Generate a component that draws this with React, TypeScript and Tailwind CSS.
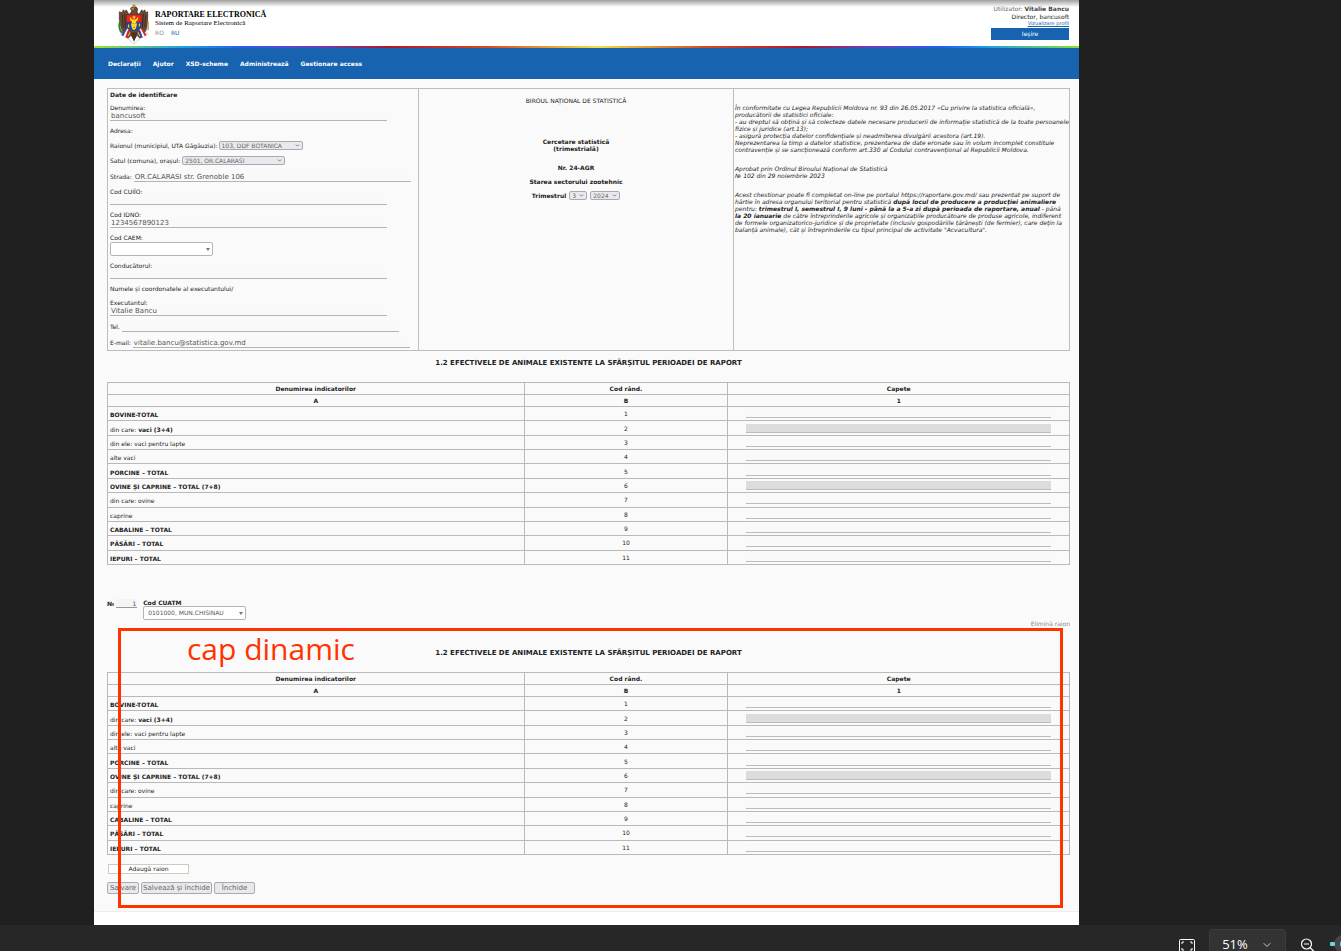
import React from "react";
import { ChevronDown } from "lucide-react";

const fieldBase = "border-b border-[#b4b4b4] bg-[#f9f9f9] px-px text-[7px] leading-[8px] text-[#555] outline-none";

function Line({ id, value = "", tall = false }: { id: string; value?: string; tall?: boolean }) {
  return <input id={id} defaultValue={value} className={`${fieldBase} block w-[277px] ${tall ? "h-[10px]" : "h-[9px]"}`} />;
}

function Stacked({ id, label, value }: { id: string; label: string; value?: string }) {
  return (
    <div className="mt-[6px]">
      <label htmlFor={id} className="block">{label}</label>
      <Line id={id} value={value} />
    </div>
  );
}

function Inline({ id, label, value }: { id: string; label: string; value?: string }) {
  return (
    <div className="mt-[6px] flex items-center gap-[2px]">
      <label htmlFor={id}>{label}</label>
      <Line id={id} value={value} tall />
    </div>
  );
}

function Pick({ id, value, size }: { id: string; value: string; size: string }) {
  return (
    <span className={`relative inline-block h-[9px] font-normal ${size}`}>
      <select id={id} aria-label={id} className="block h-[9px] w-full appearance-none rounded-[2px] border border-[#a9a9b4] bg-[#e9e9ed] pl-[2px] text-[6px] leading-[7px] text-[#666] outline-none">
        <option>{value}</option>
      </select>
      <ChevronDown className="pointer-events-none absolute right-[3px] top-[2px] size-[5px] text-[#444]" strokeWidth={3} />
    </span>
  );
}

function Combo({ id, value }: { id: string; value: string }) {
  return (
    <span className="relative block h-[14px] w-[103px]">
      <select id={id} className="block h-[14px] w-full appearance-none rounded-[2px] border border-[#b5b5b5] bg-white pl-[4px] text-[6px] leading-[12px] text-[#555] outline-none">
        <option>{value}</option>
      </select>
      <svg viewBox="0 0 4 3" className="pointer-events-none absolute right-[3px] top-[6px] h-[3px] w-[4px]">
        <path d="M0 0h4L2 3z" fill="#777" />
      </svg>
    </span>
  );
}

type Row = { plain?: string; bold?: string; total?: boolean };
const rows: Row[] = [
  { bold: "BOVINE-TOTAL" },
  { plain: "din care: ", bold: "vaci (3+4)", total: true },
  { plain: "din ele: vaci pentru lapte" },
  { plain: "alte vaci" },
  { bold: "PORCINE – TOTAL" },
  { bold: "OVINE ȘI CAPRINE – TOTAL (7+8)", total: true },
  { plain: "din care: ovine" },
  { plain: "caprine" },
  { bold: "CABALINE – TOTAL" },
  { bold: "PĂSĂRI – TOTAL" },
  { bold: "IEPURI – TOTAL" },
];

function Animals({ name }: { name: string }) {
  const cell = "border border-[#b9b9b9]";
  return (
    <>
      <h2 className="text-center text-[7px] leading-[8px] font-bold">
        1.2 EFECTIVELE DE ANIMALE EXISTENTE LA SFÂRȘITUL PERIOADEI DE RAPORT
      </h2>
      <table className="mt-[15px] h-[183px] w-full table-fixed border-collapse">
        <colgroup>
          <col className="w-[43.3%]" />
          <col className="w-[21.2%]" />
          <col />
        </colgroup>
        <thead>
          <tr className="h-[12px]">
            <th className={cell}>Denumirea indicatorilor</th>
            <th className={cell}>Cod rând.</th>
            <th className={cell}>Capete</th>
          </tr>
          <tr className="h-[12px]">
            <th className={cell}>A</th>
            <th className={cell}>B</th>
            <th className={cell}>1</th>
          </tr>
        </thead>
        <tbody>
          {rows.map((r, i) => (
            <tr key={i}>
              <td className={`${cell} px-[2px] pt-[3px]`}>
                {r.plain}
                <b>{r.bold}</b>
              </td>
              <td className={`${cell} pt-px text-center`}>{i + 1}</td>
              <td className={`${cell} px-[18px] py-[2px]`}>
                <input
                  aria-label={`${name} ${i + 1}`}
                  readOnly={r.total}
                  className={`block h-[9px] w-full border-b border-[#bbb] text-[6px] outline-none ${r.total ? "bg-[#dcdcdc]" : "bg-[#f9f9f9]"}`}
                />
              </td>
            </tr>
          ))}
        </tbody>
      </table>
    </>
  );
}

function Emblem() {
  return (
    <svg viewBox="0 0 32 42" className="h-[41px] w-[32px]" aria-label="Stema">
      <path d="M2 31l7 4 7 6 7-6 7-4-2-4H4z" fill="#fff" stroke="#cfcfcf" strokeWidth="1" />
      <path d="M14 7C12 6 12 3 15 3h3c2 1 2 3 1 5l2 3 3-5 1 2 2-2 1 3 2-1v8l-1 9-2 4-2-2-3 8-3-3-3 5-3-5-3 3-3-8-2 2-2-4-2-9V8l3 1 1-3 2 2 1-2 3 5z" fill="#6b4a35" stroke="#3a2418" strokeWidth=".7" />
      <path d="M4 11l1 13M6.500 10l1 17M25.500 10l-1 17M28 11l-1 13" stroke="#33221a" strokeWidth=".8" />
      <path d="M16 0v4M14.300 1.500h3.400" stroke="#b8952a" strokeWidth="1" />
      <path d="M12.500 5l3-1v2z" fill="#e9c22c" />
      <path d="M8 11h16v8H8z" fill="#e8261c" stroke="#33221a" strokeWidth=".4" />
      <path d="M8 19h16c0 5-3 8-8 9-5-1-8-4-8-9z" fill="#2142a8" />
      <path d="M12 13c-1 3 1 4 2 5l-1 3 1 4 2 2 2-2 1-4-1-3c1-1 3-2 2-5-1 2-2 3-4 3s-3-1-4-3z" fill="#f4dc22" />
      <path d="M16 11.500l.7 1.300 1.300.2-1 1 .3 1.300-1.300-.6-1.300.6.3-1.300-1-1 1.300-.2z" fill="#f4cf22" />
      <path d="M14.500 20h1M16.800 20h1M15 24h2" stroke="#8a6a10" strokeWidth=".7" />
      <path d="M10.500 21v3M21.500 20v3" stroke="#f4cf22" strokeWidth="1.300" />
      <path d="M1.500 18c-1 5 0 10 3 12" fill="none" stroke="#2f7d36" strokeWidth="2" />
      <path d="M30.500 18v9" stroke="#b99b35" strokeWidth="1.300" />
      <path d="M3 32l5-8 2 2-4 7z" fill="#2849ad" />
      <path d="M5 33l4-8 1.500 1.500L8 34z" fill="#fff" />
      <path d="M7 34l3-8 1.500 2L10 35z" fill="#d82525" />
      <path d="M29 32l-5-8-2 2 4 7z" fill="#d82525" />
      <path d="M27 33l-4-8-1.500 1.500L24 34z" fill="#fff" />
      <path d="M25 34l-3-8-1.500 2 1.500 7z" fill="#2849ad" />
      <path d="M12.500 29h7L16 39z" fill="#50301f" />
      <path d="M12 29l-2 4M20 29l2 4" stroke="#dfb62c" strokeWidth="1.100" />
    </svg>
  );
}

export default function App() {
  return (
    <div className="flex min-h-screen flex-col bg-[#202020] font-['DejaVu_Sans',sans-serif] text-[6px] leading-[8px] text-[#222]">
      <div className="relative mr-[262px] ml-[94px] flex-1 bg-white">
        <header className="flex h-[46px] justify-between bg-linear-to-b from-[#a0a0a0] to-white to-[7px] pr-[10px] pl-[24px]">
          <div className="flex gap-[5px] pt-[4px]">
            <Emblem />
            <div className="pt-[6px] font-['Liberation_Serif',serif]">
              <h1 className="text-[8px] leading-[9px] font-bold text-black">RAPORTARE ELECTRONICĂ</h1>
              <p className="text-[7px] leading-[9px] text-black">Sistem de Raportare Electronică</p>
              <p className="flex gap-[7px] font-['DejaVu_Sans',sans-serif] text-[6px] leading-[9px] text-[#888]">
                <span>RO</span>
                <a href="#ru" className="text-[#1763af]">RU</a>
              </p>
            </div>
          </div>
          <div className="flex w-[78px] flex-col pt-[4px] text-right whitespace-nowrap">
            <p className="self-end leading-[9px] text-[#666]">Utilizator: <b className="text-[#444]">Vitalie Bancu</b></p>
            <p className="leading-[7px]">Director, bancusoft</p>
            <p className="text-[5px] leading-[7px]"><a href="#profil" className="text-[#1763af] underline">Vizualizare profil</a></p>
            <button className="mt-px h-[12px] bg-[#1763af] text-center text-white">Ieșire</button>
          </div>
        </header>
        <div className="h-[2px] bg-[linear-gradient(to_right,#9be82a_0%,#22a0e0_9%,#2560e8_15%,#6a3fc0_22%,#b01828_30%,#d84a20_40%,#f2e040_51%,#d84a20_62%,#b01828_72%,#6a3fc0_79%,#2060f0_86%,#22a0e0_91%,#8be02a_100%)]" />
        <nav className="flex h-[31px] items-center gap-[12px] bg-[#1763af] pl-[14px] font-bold text-white">
          <a href="#declaratii">Declarații</a>
          <a href="#ajutor">Ajutor</a>
          <a href="#xsd">XSD-scheme</a>
          <a href="#admin">Administrează</a>
          <a href="#access">Gestionare access</a>
        </nav>

        <main className="min-h-[833px] border-b border-[#eee] bg-[#fafafa] pt-[9px] pr-[9px] pl-[13px]">
          <section className="grid grid-cols-[minmax(0,311fr)_minmax(0,315fr)_minmax(0,335fr)] divide-x divide-[#bdbdbd] border border-[#bdbdbd]">
            <div className="px-[2px] pt-[2px] pb-[2px]">
              <h2 className="font-bold">Date de identificare</h2>
              <div className="mt-[5px]">
                <label htmlFor="denumirea" className="block">Denumirea:</label>
                <Line id="denumirea" value="bancusoft" />
              </div>
              <p className="mt-[6px]">Adresa:</p>
              <div className="mt-[6px] flex items-center gap-px">
                <label htmlFor="raion">Raionul (municipiul, UTA Găgăuzia):</label>
                <Pick id="raion" value="103, DDF BOTANICA" size="w-[84px]" />
              </div>
              <div className="mt-[6px] flex items-center gap-[2px]">
                <label htmlFor="satul">Satul (comuna), orașul:</label>
                <Pick id="satul" value="2501, OR.CALARASI" size="w-[103px]" />
              </div>
              <div className="mt-[7px]">
                <Inline id="strada" label="Strada:" value="OR.CALARASI str. Grenoble 106" />
              </div>
              <Stacked id="cuiio" label="Cod CUIÎO:" />
              <Stacked id="idno" label="Cod IDNO:" value="1234567890123" />
              <div className="mt-[6px]">
                <label htmlFor="caem" className="block">Cod CAEM:</label>
                <Combo id="caem" value="" />
              </div>
              <Stacked id="conducator" label="Conducătorul:" />
              <p className="mt-[6px]">Numele și coordonatele al executantului/</p>
              <Stacked id="executant" label="Executantul:" value="Vitalie Bancu" />
              <Inline id="tel" label="Tel." />
              <Inline id="email" label="E-mail:" value="vitalie.bancu@statistica.gov.md" />
            </div>
            <div className="pt-[8px] text-center font-bold">
              <p className="font-normal">BIROUL NAȚIONAL DE STATISTICĂ</p>
              <p className="mt-[33px] leading-[7px]">Cercetare statistică<br />(trimestrială)</p>
              <p className="mt-[12px]">Nr. 24-AGR</p>
              <p className="mt-[6px]">Starea sectorului zootehnic</p>
              <p className="mt-[5px] flex items-center justify-center gap-[3px]">
                Trimestrul
                <Pick id="trimestru" value="3" size="w-[18px]" />
                <Pick id="an" value="2024" size="w-[30px]" />
              </p>
            </div>
            <div className="pt-[15px] pl-px leading-[7px] whitespace-nowrap italic">
              <p>
                În conformitate cu Legea Republicii Moldova nr. 93 din 26.05.2017 «Cu privire la statistica oficială»,<br />
                producătorii de statistici oficiale:<br />
                - au dreptul să obțină și să colecteze datele necesare producerii de informație statistică de la toate persoanele<br />
                fizice și juridice (art.13);<br />
                - asigură protecția datelor confidențiale și neadmiterea divulgării acestora (art.19).<br />
                Neprezentarea la timp a datelor statistice, prezentarea de date eronate sau în volum incomplet constituie<br />
                contravenție și se sancționează conform art.330 al Codului contravențional al Republicii Moldova.
              </p>
              <p className="mt-[12px]">Aprobat prin Ordinul Biroului Național de Statistică<br />№ 102 din 29 noiembrie 2023</p>
              <p className="mt-[12px]">
                Acest chestionar poate fi completat on-line pe portalul https://raportare.gov.md/ sau prezentat pe suport de<br />
                hârtie în adresa organului teritorial pentru statistică <b>după locul de producere a producției animaliere</b><br />
                pentru: <b>trimestrul I, semestrul I, 9 luni - până la a 5-a zi după perioada de raportare, anual</b> - până<br />
                <b>la 20 ianuarie</b> de către întreprinderile agricole și organizațiile producătoare de produse agricole, indiferent<br />
                de formele organizatorico-juridice și de proprietate (inclusiv gospodăriile țărănești (de fermier), care dețin la<br />
                balanță animale), cât și întreprinderile cu tipul principal de activitate "Acvacultura".
              </p>
            </div>
          </section>

          <section className="pt-[8px]">
            <Animals name="Total rând" />
          </section>

          <div className="mt-[34px] flex items-start gap-[6px]">
            <div className="flex items-center gap-[2px] font-bold">
              <label htmlFor="nr">№</label>
              <input id="nr" defaultValue="1" className="h-[9px] w-[21px] border-b border-[#999] bg-[#f4f4f4] pr-px text-right text-[6px] font-normal text-[#555] outline-none" />
            </div>
            <div>
              <label htmlFor="cuatm" className="block leading-[7px] font-bold">Cod CUATM</label>
              <Combo id="cuatm" value="0101000, MUN.CHISINAU" />
            </div>
          </div>
          <div className="flex justify-end">
            <button className="leading-[7px] text-[#888]">Elimină raion</button>
          </div>

          <section className="pt-[22px]">
            <Animals name="Raion rând" />
          </section>

          <button className="mt-[9px] ml-px block h-[10px] w-[81px] border border-[#ccccc0] bg-white">Adaugă raion</button>
          <div className="mt-[8px] flex gap-[2px] text-[7px] leading-[8px] text-[#666]">
            <button className="h-[12px] w-[32px] rounded-[2px] border border-[#a9a9b4] bg-[#e9e9ed]">Salvare</button>
            <button className="h-[12px] w-[71px] rounded-[2px] border border-[#a9a9b4] bg-[#e9e9ed] whitespace-nowrap">Salvează și închide</button>
            <button className="h-[12px] w-[41px] rounded-[2px] border border-[#a9a9b4] bg-[#e9e9ed]">Închide</button>
          </div>
        </main>

        <div className="pointer-events-none absolute top-[628px] right-[16px] bottom-[17px] left-[24px] border-3 border-[#ff3300] pl-[66px] font-['Open_Sans',sans-serif] text-[30px] leading-[36px] text-[#ff3300]">
          cap dinamic
        </div>
      </div>

      <footer className="flex h-[26px] items-start justify-end overflow-hidden bg-[#272727] font-['Open_Sans',sans-serif] text-white">
        <button aria-label="Ecran complet" className="mt-[14px] mr-[14px]">
          <svg viewBox="0 0 16 14" className="h-[14px] w-[16px]" fill="none" stroke="#fff" strokeWidth="1">
            <rect x=".5" y=".5" width="15" height="13" rx="1" />
            <path d="M3 5V3h2M11 3h2v2M3 9v2h2M11 11h2V9" />
          </svg>
        </button>
        <button className="mt-[4px] flex h-[22px] w-[77px] items-end justify-center gap-[13px] rounded-t-[4px] border border-b-0 border-[#3c3c3c] bg-[#333] text-[13px] leading-[14px]">
          51%
          <ChevronDown className="size-[12px] text-[#ccc]" />
        </button>
        <button aria-label="Micșorează" className="mt-[13px] ml-[15px]">
          <svg viewBox="0 0 14 14" className="size-[14px]" fill="none" stroke="#fff" strokeWidth="1.200">
            <circle cx="5.500" cy="6" r="5" />
            <path d="M3 6h5M9 9.500l4.500 4.500" />
          </svg>
        </button>
        <svg viewBox="0 0 11 16" className="mt-[10px] ml-[15px] h-[16px] w-[11px]">
          <circle cx="13" cy="9" r="9" fill="#454545" />
          <circle cx="14" cy="9" r="4" fill="#6fd3dc" />
          <rect y="7" width="5" height="4" rx="1" fill="#6fd3dc" />
        </svg>
      </footer>
    </div>
  );
}
